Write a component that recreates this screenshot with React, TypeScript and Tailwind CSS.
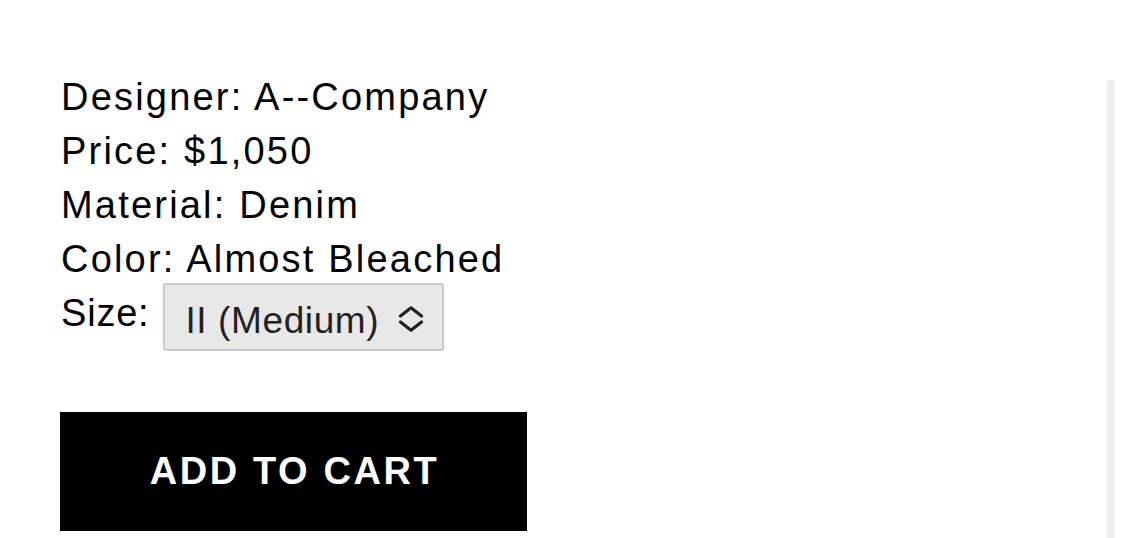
import React from 'react';

const details = [
  { label: 'Designer', value: 'A--Company' },
  { label: 'Price', value: '$1,050' },
  { label: 'Material', value: 'Denim' },
  { label: 'Color', value: 'Almost Bleached' },
];

export default function App() {
  return (
    <div
      className="flex h-[538px] w-full overflow-hidden bg-white text-black"
      style={{ fontFamily: '"Liberation Sans", Arial, sans-serif' }}
    >
      <div className="pl-[61px] pt-[70px]">
        {details.map((d) => (
          <div key={d.label} className="text-[38px] leading-[54px] tracking-[2.2px]">
            {d.label}: {d.value}
          </div>
        ))}
        <div className="flex items-start text-[38px] leading-[54px] tracking-[0.8px]">
          <span>Size:</span>
          <div className="ml-[14px] -mt-[3px] flex h-[68px] w-[281px] items-center rounded-[3px] border-2 border-[#cacaca] bg-[#e8e8e8] pl-[20px] pr-[18px]">
            <span className="pt-[7px] text-[37px] leading-none tracking-[0.6px] text-[#222]">
              II (Medium)
            </span>
            <svg
              className="ml-auto mt-[4px]"
              width="26"
              height="26"
              viewBox="0 0 26 26"
              fill="none"
              stroke="#222"
              strokeWidth="3.2"
              strokeLinecap="round"
              strokeLinejoin="round"
            >
              <path d="M2.5 10 L13 1.8 L23.5 10" />
              <path d="M2.5 16 L13 24.2 L23.5 16" />
            </svg>
          </div>
        </div>
        <button className="ml-[-1px] mt-[61px] flex h-[119px] w-[467px] items-center justify-center bg-black pl-[2px] text-[38px] font-bold tracking-[2.6px] text-white">
          ADD TO CART
        </button>
      </div>
      <div className="ml-auto mr-[10px] mt-[80px] w-[8px] rounded-t-full bg-[#eeeeee]" />
    </div>
  );
}
